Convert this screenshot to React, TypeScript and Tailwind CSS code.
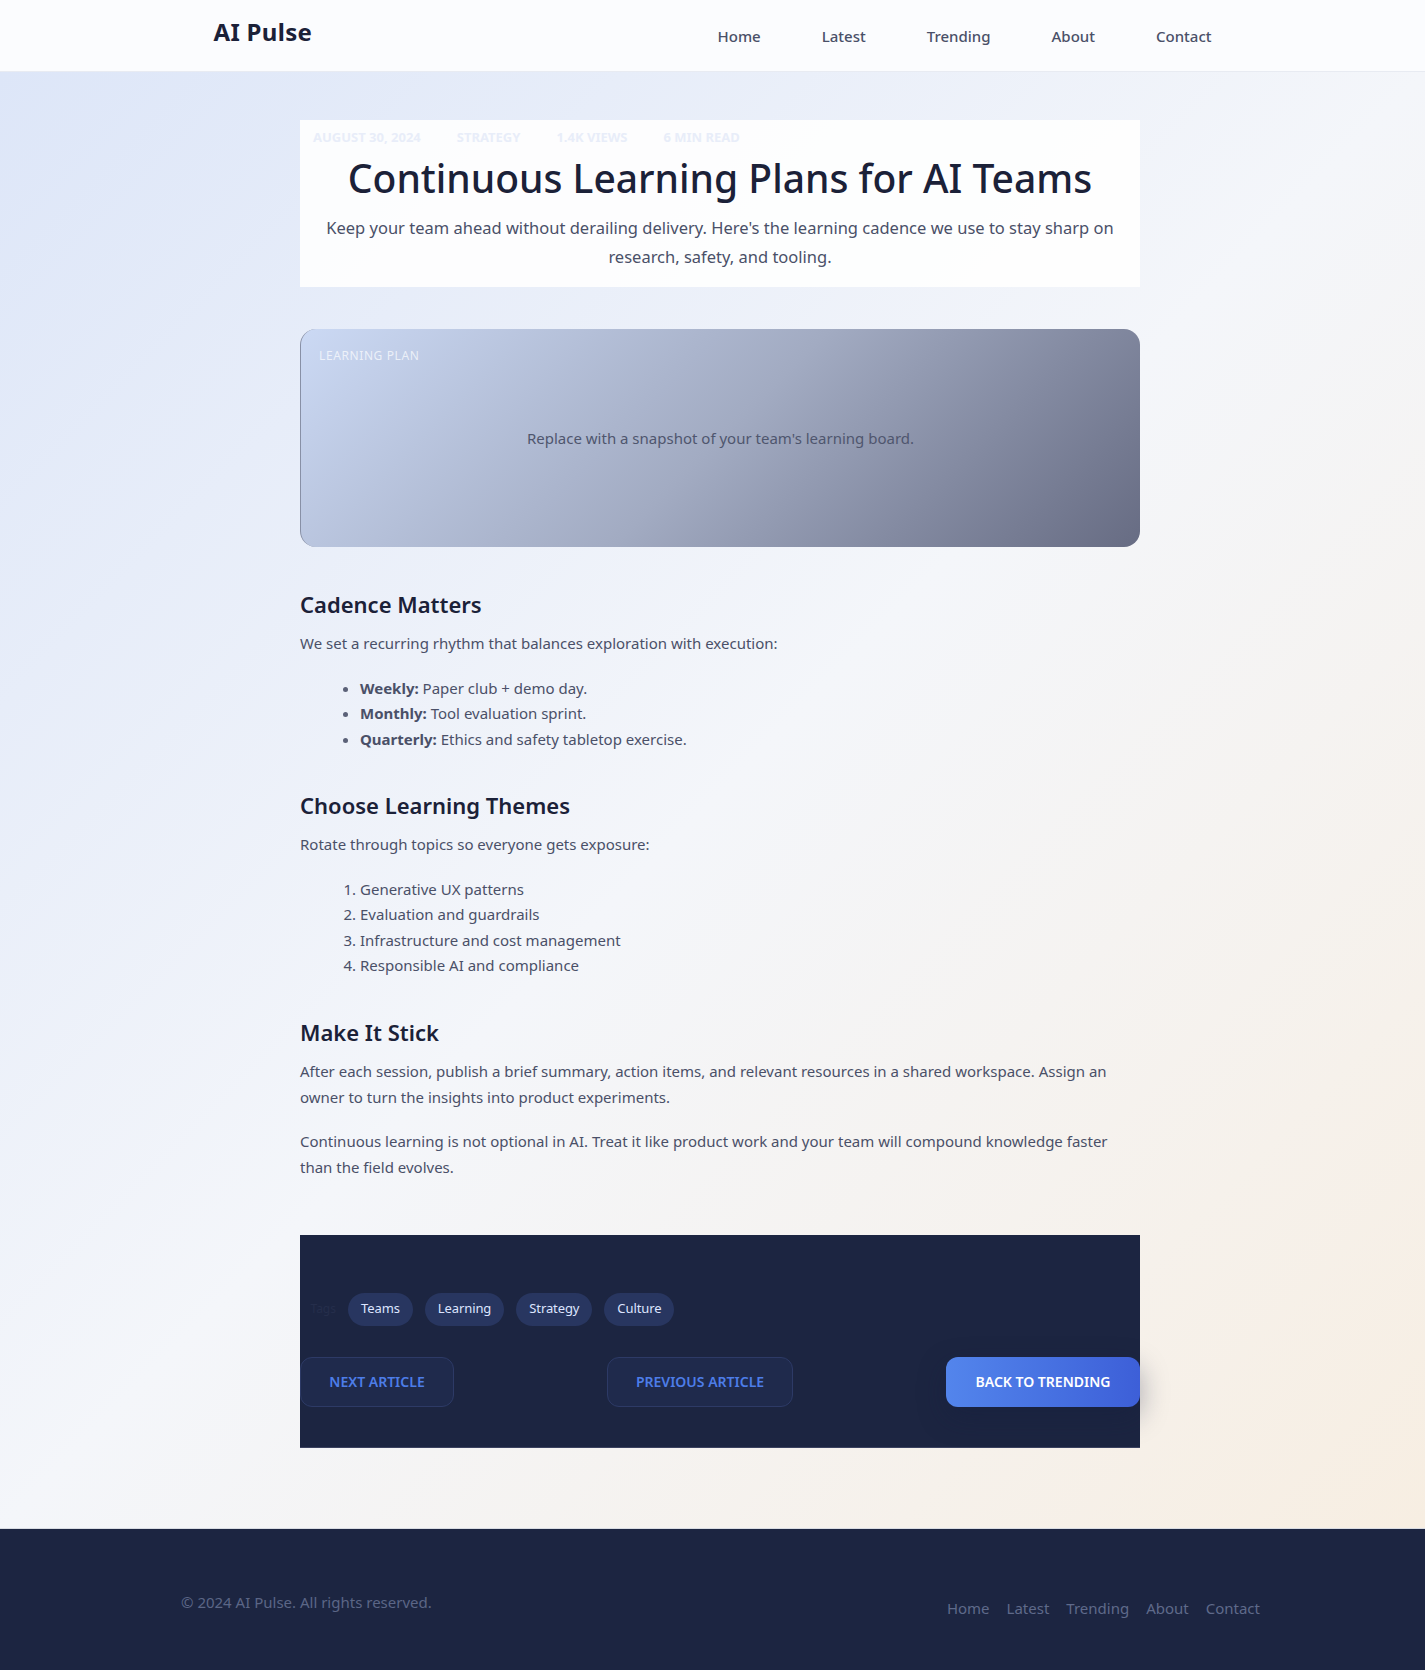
const navLinks = ["Home", "Latest", "Trending", "About", "Contact"];
const tags = ["Teams", "Learning", "Strategy", "Culture"];
const meta = ["August 30, 2024", "Strategy", "1.4K Views", "6 Min Read"];

const App = () => {
  return (
    <div className="min-h-screen font-['Noto_Sans',sans-serif] text-[#4a5068]">
      {/* HEADER */}
      <header className="h-[72px] bg-[#fbfcfe] border-b border-[#e8ebf2]">
        <div className="w-[998px] h-full mx-auto flex items-center justify-between">
          <a className="mb-2 text-[24px] font-bold tracking-[0.3px] text-[#1b2138]">AI Pulse</a>
          <nav className="mt-[2px] flex gap-[61px] text-[15px] font-medium text-[#4a5068]">
            {navLinks.map((l) => (
              <a key={l}>{l}</a>
            ))}
          </nav>
        </div>
      </header>

      {/* MAIN */}
      <main className="flex justify-center pl-[15px] bg-gradient-to-br from-[#dde6f8] via-[#f4f6fa] to-[#f7eee2] pt-12 pb-20">
        <article className="w-[840px]">
          {/* HERO */}
          <div className="bg-white/90 px-6 pt-2 pb-4 text-center">
            <div className="flex gap-9 -ml-[11px] text-[13px] font-bold uppercase text-[#e8edf9]">
              {meta.map((m) => (
                <span key={m}>{m}</span>
              ))}
            </div>
            <h1 className="mt-[5px] text-[39px] leading-[1.3] font-medium text-[#1b2138]">
              Continuous Learning Plans for AI Teams
            </h1>
            <p className="mt-[10px] text-[16.5px] leading-[29px] text-[#4a5068]">
              Keep your team ahead without derailing delivery. Here's the learning cadence we use to stay sharp on
              research, safety, and tooling.
            </p>
          </div>

          {/* IMAGE PLACEHOLDER */}
          <div className="mt-[42px] h-[218px] rounded-2xl border-l border-[#8890a6] bg-linear-135 from-[#cbd9f4] via-[#a2abc2] to-[#676c83] px-[18px] pt-[18px] flex flex-col">
            <span className="text-[12px] uppercase tracking-[0.6px] text-white/70">Learning Plan</span>
            <div className="flex-1 flex items-center justify-center pb-9 text-[15px] text-[#4f566e]">
              Replace with a snapshot of your team's learning board.
            </div>
          </div>

          {/* BODY */}
          <section className="mt-[41px]">
            <h2 className="text-[22px] leading-8 font-semibold text-[#1b2138]">Cadence Matters</h2>
            <p className="mt-[11px] text-[15px] leading-[1.7]">
              We set a recurring rhythm that balances exploration with execution:
            </p>
            <ul className="mt-[19px] pl-[60px] list-disc text-[15px] leading-[1.7] marker:text-[#5b6178]">
              <li>
                <strong className="font-bold">Weekly:</strong> Paper club + demo day.
              </li>
              <li>
                <strong className="font-bold">Monthly:</strong> Tool evaluation sprint.
              </li>
              <li>
                <strong className="font-bold">Quarterly:</strong> Ethics and safety tabletop exercise.
              </li>
            </ul>
          </section>

          <section className="mt-[37px]">
            <h2 className="text-[22px] leading-8 font-semibold text-[#1b2138]">Choose Learning Themes</h2>
            <p className="mt-[11px] text-[15px] leading-[1.7]">Rotate through topics so everyone gets exposure:</p>
            <ol className="mt-[19px] pl-[60px] list-decimal text-[15px] leading-[1.7]">
              <li>Generative UX patterns</li>
              <li>Evaluation and guardrails</li>
              <li>Infrastructure and cost management</li>
              <li>Responsible AI and compliance</li>
            </ol>
          </section>

          <section className="mt-[37px]">
            <h2 className="text-[22px] leading-8 font-semibold text-[#1b2138]">Make It Stick</h2>
            <p className="mt-[10px] text-[15px] leading-[26px]">
              After each session, publish a brief summary, action items, and relevant resources in a shared workspace.
              Assign an owner to turn the insights into product experiments.
            </p>
            <p className="mt-[18px] text-[15px] leading-[26px]">
              Continuous learning is not optional in AI. Treat it like product work and your team will compound
              knowledge faster than the field evolves.
            </p>
          </section>

          {/* TAGS + NAV */}
          <div className="mt-[55px] h-[213px] bg-[#1c2541] border-b border-[#3b4260] pt-[58px]">
            <div className="flex items-center gap-3">
              <span className="w-[36px] text-right text-[12px] text-[#252e4b]">Tags</span>
              {tags.map((t) => (
                <span
                  key={t}
                  className="h-[33px] px-[13px] flex items-center rounded-full bg-[#283660] text-[13px] tracking-[-0.1px] text-[#dde5ff]"
                >
                  {t}
                </span>
              ))}
            </div>
            <div className="mt-[31px] flex justify-between">
              <a className="h-[50px] w-[154px] flex items-center justify-center rounded-xl border border-[#2d3a66] bg-[#1f2a4c] text-[14px] font-semibold uppercase text-[#4d7de8]">
                Next Article
              </a>
              <a className="h-[50px] w-[186px] flex items-center justify-center rounded-xl border border-[#2d3a66] bg-[#1f2a4c] text-[14px] font-semibold uppercase text-[#4d7de8]">
                Previous Article
              </a>
              <a className="h-[50px] w-[194px] flex items-center justify-center rounded-xl bg-gradient-to-r from-[#5385ec] to-[#3d5fd8] text-[14px] font-semibold uppercase text-white shadow-[0_10px_28px_rgba(20,30,60,0.35)]">
                Back to Trending
              </a>
            </div>
          </div>
        </article>
      </main>

      {/* FOOTER */}
      <footer className="h-[142px] bg-[#1c2541] border-t border-[#d8dbe2] pl-[181px] pr-[165px] pt-[62px] flex justify-between items-start">
        <p className="text-[15px] text-[#5b6686]">© 2024 AI Pulse. All rights reserved.</p>
        <nav className="mt-[6px] flex gap-[17px] text-[15px] text-[#5f6a8a]">
          {navLinks.map((l) => (
            <a key={l}>{l}</a>
          ))}
        </nav>
      </footer>
    </div>
  );
};

export default App;
